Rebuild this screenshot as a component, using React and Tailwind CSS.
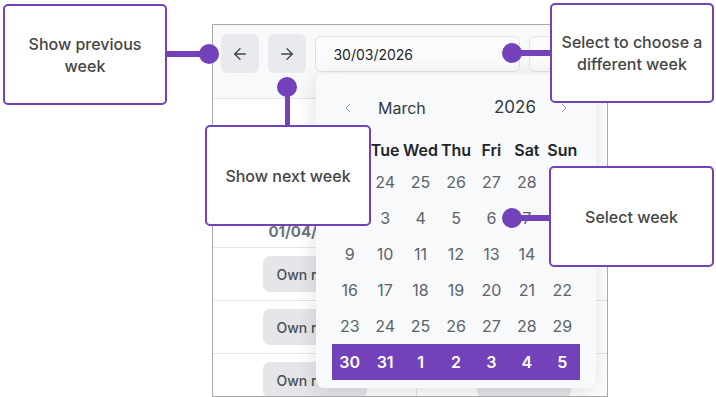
import React from 'react';
import { ArrowLeft, ArrowRight, ChevronLeft, ChevronRight } from 'lucide-react';

const weeks = [
  [23, 24, 25, 26, 27, 28, 1],
  [2, 3, 4, 5, 6, 7, 8],
  [9, 10, 11, 12, 13, 14, 15],
  [16, 17, 18, 19, 20, 21, 22],
  [23, 24, 25, 26, 27, 28, 29],
  [30, 31, 1, 2, 3, 4, 5],
];

const dayNames = ['Mon', 'Tue', 'Wed', 'Thu', 'Fri', 'Sat', 'Sun'];

function Callout({ className, children }) {
  return (
    <div
      className={`absolute flex items-center justify-center rounded-[5px] border-2 border-[#7341b9] bg-white px-2 text-center text-[16px] font-medium leading-[22px] text-[#454545] ${className}`}
    >
      {children}
    </div>
  );
}

function Calendar() {
  return (
    <div className="absolute left-[103px] top-[49px] h-[314px] w-[280px] rounded-[8px] bg-[#f8f9fb] px-4 pt-4 shadow-[0_4px_22px_rgba(0,0,0,0.13)]">
      <div className="flex h-[36px] items-center">
        <div className="flex w-[32px] justify-center text-[#8b9299]">
          <ChevronLeft size={16} strokeWidth={1.5} />
        </div>
        <div className="w-[122px] pl-[14px] text-[16px] text-[#343a40]">March</div>
        <div className="w-[49px] overflow-hidden whitespace-nowrap pl-[8px] text-[17px] text-[#343a40]">2026</div>
        <div className="ml-auto flex w-[32px] justify-center text-[#8b9299]">
          <ChevronRight size={16} strokeWidth={1.5} />
        </div>
      </div>
      <div className="mt-[10px] grid h-[28px] grid-cols-7 items-center text-center text-[16px] font-semibold text-[#212529]">
        {dayNames.map((d) => (
          <div key={d}>{d}</div>
        ))}
      </div>
      {weeks.map((w, i) => (
        <div
          key={i}
          className={`grid h-[36px] grid-cols-7 items-center text-center text-[16px] ${
            i === 5 ? 'bg-[#7341b9] font-semibold text-white' : 'text-[#5c636a]'
          }`}
        >
          {w.map((d, j) => (
            <div key={j}>{d}</div>
          ))}
        </div>
      ))}
    </div>
  );
}

function Row({ last }) {
  return (
    <div className={`flex h-[53px] ${last ? '' : 'border-b border-[#e3e5e8]'}`}>
      <div className="flex w-[204px] justify-center border-r border-[#e3e5e8] pt-[8px]">
        <div className="flex h-[36px] w-[104px] items-center rounded-[7px] bg-[#e5e6ea] pl-[14px] text-[14px] font-medium text-[#495057]">
          Own rota
        </div>
      </div>
      <div className="flex-1 pl-[60px] pt-[8px]">
        <div className="flex h-[36px] w-[94px] items-center rounded-[7px] bg-[#e5e6ea] pl-[14px] text-[14px] font-medium text-[#495057]">
          Own rota
        </div>
      </div>
    </div>
  );
}

export default function App() {
  return (
    <div className="relative h-[397px] w-[716px] overflow-hidden bg-white font-['Inter',sans-serif]">
      <div className="pl-[212px] pt-[24px]">
        <div className="relative h-[373px] w-[396px] overflow-hidden border border-[#a8a8a8] bg-white">
          <div className="flex h-[74px] items-start gap-[9px] border-b border-[#e3e5e8] bg-[#f8f9fa] pl-[8px] pt-[9px]">
            <button className="flex h-[39px] w-[39px] items-center justify-center rounded-[6px] bg-[#e9eaed] text-[#3f454b]">
              <ArrowLeft size={18} strokeWidth={1.75} />
            </button>
            <button className="flex h-[39px] w-[39px] items-center justify-center rounded-[6px] bg-[#e9eaed] text-[#3f454b]">
              <ArrowRight size={18} strokeWidth={1.75} />
            </button>
            <div className="mt-[2px] flex h-[36px] w-[208px] items-center rounded-[6px] border border-[#e1e3e6] bg-[#fbfbfc] pl-[17px] text-[14px] text-[#212529]">
              30/03/2026
            </div>
            <div className="mt-[2px] h-[36px] w-[80px] rounded-[6px] border border-[#e1e3e6] bg-[#fbfbfc]" />
          </div>
          <div className="flex h-[149px] border-b border-[#e3e5e8]">
            <div className="flex w-[204px] flex-col items-center justify-end pb-[4px] pr-[6px] text-[15px] font-bold text-[#6c757d]">
              <div>Wednesday</div>
              <div>01/04/2026</div>
            </div>
            <div className="flex flex-1 flex-col items-center justify-end pb-[4px] text-[15px] font-bold text-[#6c757d]">
              <div>Thursday</div>
              <div>02/04/2026</div>
            </div>
          </div>
          <Row />
          <Row />
          <Row last />
          <Calendar />
        </div>
      </div>

      <Callout className="left-[3px] top-[4px] h-[101px] w-[164px]">
        Show previous
        <br />
        week
      </Callout>
      <div className="absolute left-[166px] top-[51px] h-[6px] w-[36px] bg-[#7341b9]" />
      <div className="absolute left-[199px] top-[44px] h-[20px] w-[20px] rounded-full bg-[#7341b9]" />

      <div className="absolute left-[285px] top-[87px] h-[40px] w-[5px] bg-[#7341b9]" />
      <div className="absolute left-[277px] top-[77px] h-[20px] w-[20px] rounded-full bg-[#7341b9]" />
      <Callout className="left-[205px] top-[125px] h-[101px] w-[166px]">Show next week</Callout>

      <div className="absolute left-[512px] top-[50px] h-[6px] w-[40px] bg-[#7341b9]" />
      <div className="absolute left-[502px] top-[43px] h-[20px] w-[20px] rounded-full bg-[#7341b9]" />
      <Callout className="left-[550px] top-[3px] h-[100px] w-[164px]">
        Select to choose a
        <br />
        different week
      </Callout>

      <div className="absolute left-[512px] top-[215px] h-[6px] w-[40px] bg-[#7341b9]" />
      <div className="absolute left-[502px] top-[208px] h-[20px] w-[20px] rounded-full bg-[#7341b9]" />
      <Callout className="left-[549px] top-[166px] h-[101px] w-[165px]">Select week</Callout>
    </div>
  );
}
